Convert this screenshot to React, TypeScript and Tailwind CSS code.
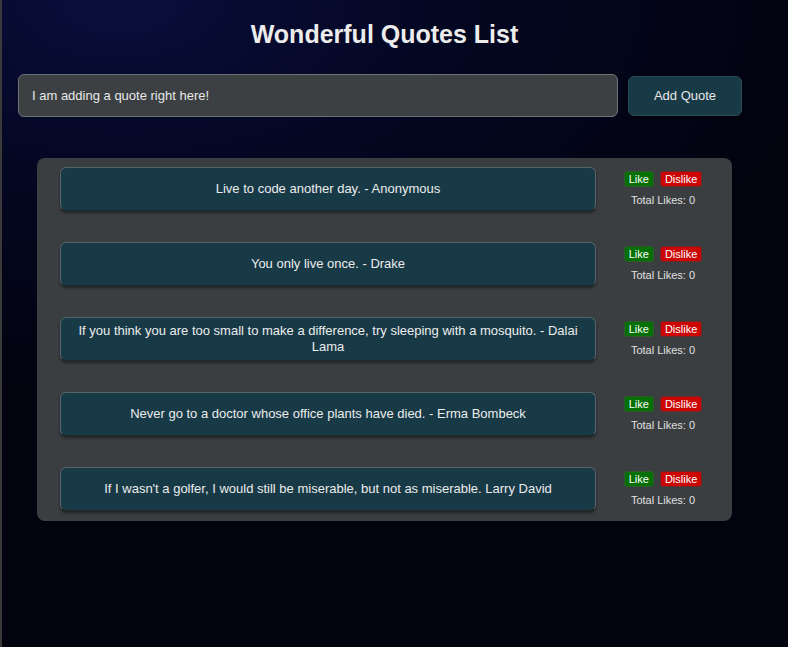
import { useState } from "react";

interface Quote {
	id: number;
	text: string;
	likes: number;
}

const initialQuotes: Quote[] = [
	{ id: 1, text: "Live to code another day. - Anonymous", likes: 0 },
	{ id: 2, text: "You only live once. - Drake", likes: 0 },
	{
		id: 3,
		text: "If you think you are too small to make a difference, try sleeping with a mosquito. - Dalai Lama",
		likes: 0,
	},
	{ id: 4, text: "Never go to a doctor whose office plants have died. - Erma Bombeck", likes: 0 },
	{
		id: 5,
		text: "If I wasn't a golfer, I would still be miserable, but not as miserable. Larry David",
		likes: 0,
	},
];

export default function App() {
	const [quotes, setQuotes] = useState(initialQuotes);
	const [newQuote, setNewQuote] = useState("I am adding a quote right here!");

	const vote = (id: number, delta: number) => {
		setQuotes(qs => qs.map(q => (q.id === id ? { ...q, likes: q.likes + delta } : q)));
	};

	const addQuote = () => {
		if (!newQuote.trim()) return;
		setQuotes(qs => [...qs, { id: Date.now(), text: newQuote, likes: 0 }]);
		setNewQuote("");
	};

	return (
		<div className="flex h-[647px] w-full font-['Liberation_Sans',Arial,sans-serif] text-[#e8e8e8]">
			<div className="w-[2px] bg-[#3a3a3a]"></div>
			<div className="flex-1 bg-[radial-gradient(ellipse_90%_60%_at_15%_0%,#0a0e3c_0%,#040722_45%,#02030f_100%)]">
				<h1 className="pr-[21px] pt-[18px] text-center text-[25px] font-bold leading-[32px] text-[#ececec]">
					Wonderful Quotes List
				</h1>
				<div className="mt-[24px] flex items-center gap-[10px] pl-[16px]">
					<input
						value={newQuote}
						onChange={e => setNewQuote(e.target.value)}
						className="h-[43px] w-[600px] rounded-[6px] border border-[#6d7275] bg-[#3c4043] px-[13px] text-[13px] text-[#e8e8e8] outline-none"
					/>
					<button
						onClick={addQuote}
						className="h-[40px] w-[114px] rounded-[6px] border border-[#2a4a55] bg-[#183a46] text-[13px] text-[#e8e8e8] shadow-[0_2px_3px_rgba(0,0,0,0.5)]"
					>
						Add Quote
					</button>
				</div>
				<div className="ml-[35px] mt-[41px] flex w-[695px] flex-col gap-[31px] rounded-[8px] bg-[#3b3e40] pb-[10px] pl-[23px] pt-[9px]">
					{quotes.map(q => (
						<div key={q.id} className="flex items-center">
							<div className="flex h-[44px] w-[536px] items-center justify-center rounded-[6px] border border-[#55656b] border-b-[#1e2a2e] bg-[#183a47] px-[12px] text-center text-[13px] leading-[16px] text-[#ececec] shadow-[0_2px_3px_rgba(0,0,0,0.45)]">
								{q.text}
							</div>
							<div className="flex flex-1 flex-col items-center pr-[2px]">
								<div className="flex gap-[6px]">
									<button
										onClick={() => vote(q.id, 1)}
										className="h-[16px] rounded-[3px] border border-[#2e5a2e] bg-[#067006] px-[4px] text-[11px] leading-[14px] text-white"
									>
										Like
									</button>
									<button
										onClick={() => vote(q.id, -1)}
										className="h-[16px] rounded-[3px] border border-[#6a2a2a] bg-[#cc0505] px-[4px] text-[11px] leading-[14px] text-white"
									>
										Dislike
									</button>
								</div>
								<div className="mt-[6px] text-[11px] leading-[14px] text-[#e0e0e0]">
									Total Likes: {q.likes}
								</div>
							</div>
						</div>
					))}
				</div>
			</div>
		</div>
	);
}
